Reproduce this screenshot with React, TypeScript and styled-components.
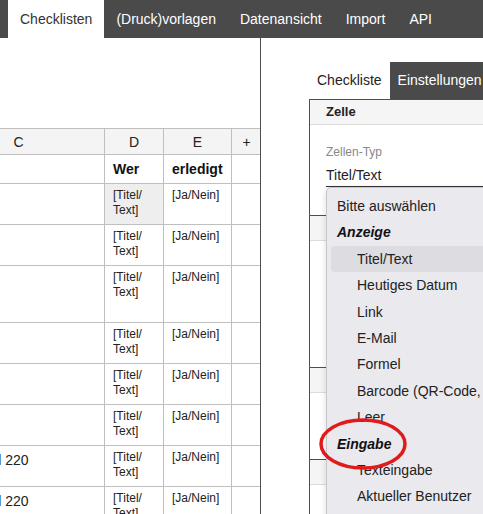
import React from "react";
import styled, { createGlobalStyle, css } from "styled-components";

const Global = createGlobalStyle`
  html, body { margin: 0; padding: 0; background: #fff; }
  body {
    font-family: "Liberation Sans", Arial, sans-serif;
    color: #222;
    overflow: hidden;
  }
`;

const Page = styled.div`
  width: 483px;
  height: 514px;
  overflow: hidden;
  display: flex;
  flex-direction: column;
`;

const NavBar = styled.nav`
  display: flex;
  height: 38px;
  background: #4a4a4a;
  padding-left: 8px;
  flex-shrink: 0;
`;

const NavTab = styled.div<{ $active?: boolean }>`
  padding: 0 12px;
  line-height: 38px;
  font-size: 14px;
  color: #fff;
  white-space: nowrap;
  ${(p) =>
    p.$active &&
    css`
      background: #fff;
      color: #333;
    `}
`;

const Main = styled.div`
  display: flex;
  flex: 1;
  min-height: 0;
`;

const LeftPane = styled.div`
  width: 260px;
  flex-shrink: 0;
  padding-top: 90px;
  overflow: hidden;
`;

const Table = styled.table`
  border-collapse: collapse;
  table-layout: fixed;
  margin-left: -68px;
  width: 329px;
`;

const HeadCell = styled.th`
  border: 1px solid #bfbfbf;
  background: #f4f4f4;
  font-weight: normal;
  font-size: 14px;
  color: #222;
  text-align: center;
  height: 25px;
  padding: 0;
`;

const LabelCell = styled.td`
  border: 1px solid #bfbfbf;
  font-weight: bold;
  font-size: 14px;
  color: #111;
  padding: 0 8px;
  height: 28px;
  vertical-align: middle;
`;

const Cell = styled.td<{ $selected?: boolean; $wide?: boolean }>`
  border: 1px solid #bfbfbf;
  vertical-align: top;
  padding: 4px 8px;
  font-size: 12px;
  line-height: 15px;
  color: #222;
  white-space: normal;
  ${(p) =>
    p.$selected &&
    css`
      background: #eeeeee;
    `}
  ${(p) =>
    p.$wide &&
    css`
      font-size: 14px;
      padding: 7px 8px 0 34px;
      white-space: nowrap;
    `}
`;

const Row = styled.tr<{ $h: number }>`
  height: ${(p) => p.$h}px;
`;

const RightPane = styled.div`
  flex: 1;
  min-width: 0;
  border-left: 1px solid #4f4f4f;
  padding: 24px 0 0 48px;
  overflow: hidden;
`;

const SubTabs = styled.div`
  display: flex;
  height: 37px;
`;

const SubTab = styled.div<{ $active?: boolean }>`
  padding: 0 8px;
  line-height: 37px;
  font-size: 14px;
  color: #222;
  white-space: nowrap;
  ${(p) =>
    p.$active &&
    css`
      background: #4a4a4a;
      color: #fff;
    `}
`;

const Card = styled.section`
  border-top: 1px solid #4f4f4f;
  border-left: 1px solid #4f4f4f;
`;

const CardHeader = styled.div`
  height: 24px;
  line-height: 24px;
  background: #f5f5f5;
  border-bottom: 1px solid #dcdcdc;
  padding-left: 16px;
  font-size: 13px;
  font-weight: bold;
  color: #222;
`;

const CardBody = styled.div<{ $h: number }>`
  height: ${(p) => p.$h}px;
  padding-left: 16px;
`;

const FieldLabel = styled.div`
  padding-top: 20px;
  font-size: 12px;
  line-height: 14px;
  color: #888;
`;

const SelectWrap = styled.div`
  position: relative;
  margin-top: 8px;
`;

const SelectValue = styled.div`
  font-size: 14px;
  line-height: 16px;
  color: #222;
  padding-bottom: 3px;
  border-bottom: 1px solid #333;
`;

const Dropdown = styled.div`
  position: absolute;
  top: 100%;
  left: 0;
  width: 220px;
  z-index: 10;
  background: #e9e9ee;
  border: 1px solid #c6c6cb;
  border-radius: 5px 0 0 0;
  box-shadow: 0 2px 6px rgba(0, 0, 0, 0.15);
  padding: 5px 4px 0;
`;

const Option = styled.div<{ $indent?: boolean; $highlight?: boolean }>`
  height: 26.4px;
  line-height: 26.4px;
  font-size: 14px;
  color: #222;
  white-space: nowrap;
  border-radius: 4px;
  padding-left: ${(p) => (p.$indent ? 26 : 6)}px;
  ${(p) =>
    p.$highlight &&
    css`
      background: #dcdce1;
    `}
`;

const Group = styled.div`
  position: relative;
  height: 26.4px;
  line-height: 26.4px;
  font-size: 14px;
  font-weight: bold;
  font-style: italic;
  color: #111;
  padding-left: 6px;
`;

const Mark = styled.svg`
  position: absolute;
  left: -13px;
  top: -14px;
  width: 90px;
  height: 54px;
  overflow: visible;
  pointer-events: none;
`;

const rows = [
  { h: 41, c: "", sel: true },
  { h: 41, c: "" },
  { h: 57, c: "" },
  { h: 41, c: "" },
  { h: 41, c: "" },
  { h: 41, c: "" },
  { h: 41, c: "Ventil 220" },
  { h: 41, c: "Ventil 220" },
];

export default function App() {
  return (
    <>
      <Global />
      <Page>
        <NavBar>
          <NavTab $active>Checklisten</NavTab>
          <NavTab>(Druck)vorlagen</NavTab>
          <NavTab>Datenansicht</NavTab>
          <NavTab>Import</NavTab>
          <NavTab>API</NavTab>
        </NavBar>
        <Main>
          <LeftPane>
            <Table>
              <colgroup>
                <col style={{ width: 172 }} />
                <col style={{ width: 59 }} />
                <col style={{ width: 68 }} />
                <col style={{ width: 30 }} />
              </colgroup>
              <thead>
                <tr>
                  <HeadCell>C</HeadCell>
                  <HeadCell>D</HeadCell>
                  <HeadCell>E</HeadCell>
                  <HeadCell>+</HeadCell>
                </tr>
              </thead>
              <tbody>
                <tr>
                  <LabelCell />
                  <LabelCell>Wer</LabelCell>
                  <LabelCell>erledigt</LabelCell>
                  <LabelCell />
                </tr>
                {rows.map((r, i) => (
                  <Row key={i} $h={r.h}>
                    <Cell $wide>{r.c}</Cell>
                    <Cell $selected={r.sel}>
                      [Titel/
                      <br />
                      Text]
                    </Cell>
                    <Cell>[Ja/Nein]</Cell>
                    <Cell />
                  </Row>
                ))}
              </tbody>
            </Table>
          </LeftPane>
          <RightPane>
            <SubTabs>
              <SubTab>Checkliste</SubTab>
              <SubTab $active>Einstellungen</SubTab>
            </SubTabs>
            <Card>
              <CardHeader>Zelle</CardHeader>
              <CardBody $h={90}>
                <FieldLabel>Zellen-Typ</FieldLabel>
                <SelectWrap>
                  <SelectValue>Titel/Text</SelectValue>
                  <Dropdown>
                    <Option>Bitte auswählen</Option>
                    <Group>Anzeige</Group>
                    <Option $indent $highlight>
                      Titel/Text
                    </Option>
                    <Option $indent>Heutiges Datum</Option>
                    <Option $indent>Link</Option>
                    <Option $indent>E-Mail</Option>
                    <Option $indent>Formel</Option>
                    <Option $indent>Barcode (QR-Code, EAN)</Option>
                    <Option $indent>Leer</Option>
                    <Group>
                      Eingabe
                      <Mark viewBox="0 0 90 54">
                        <ellipse
                          cx="45"
                          cy="27"
                          rx="42"
                          ry="24"
                          fill="none"
                          stroke="#e01b1b"
                          strokeWidth="3.5"
                        />
                      </Mark>
                    </Group>
                    <Option $indent>Texteingabe</Option>
                    <Option $indent>Aktueller Benutzer</Option>
                    <Option $indent>Datum</Option>
                  </Dropdown>
                </SelectWrap>
              </CardBody>
            </Card>
            <Card>
              <CardHeader>Inhalt</CardHeader>
              <CardBody $h={126} />
            </Card>
            <Card>
              <CardHeader>Format</CardHeader>
              <CardBody $h={66} />
            </Card>
            <Card>
              <CardHeader>Rahmen</CardHeader>
              <CardBody $h={80} />
            </Card>
          </RightPane>
        </Main>
      </Page>
    </>
  );
}
